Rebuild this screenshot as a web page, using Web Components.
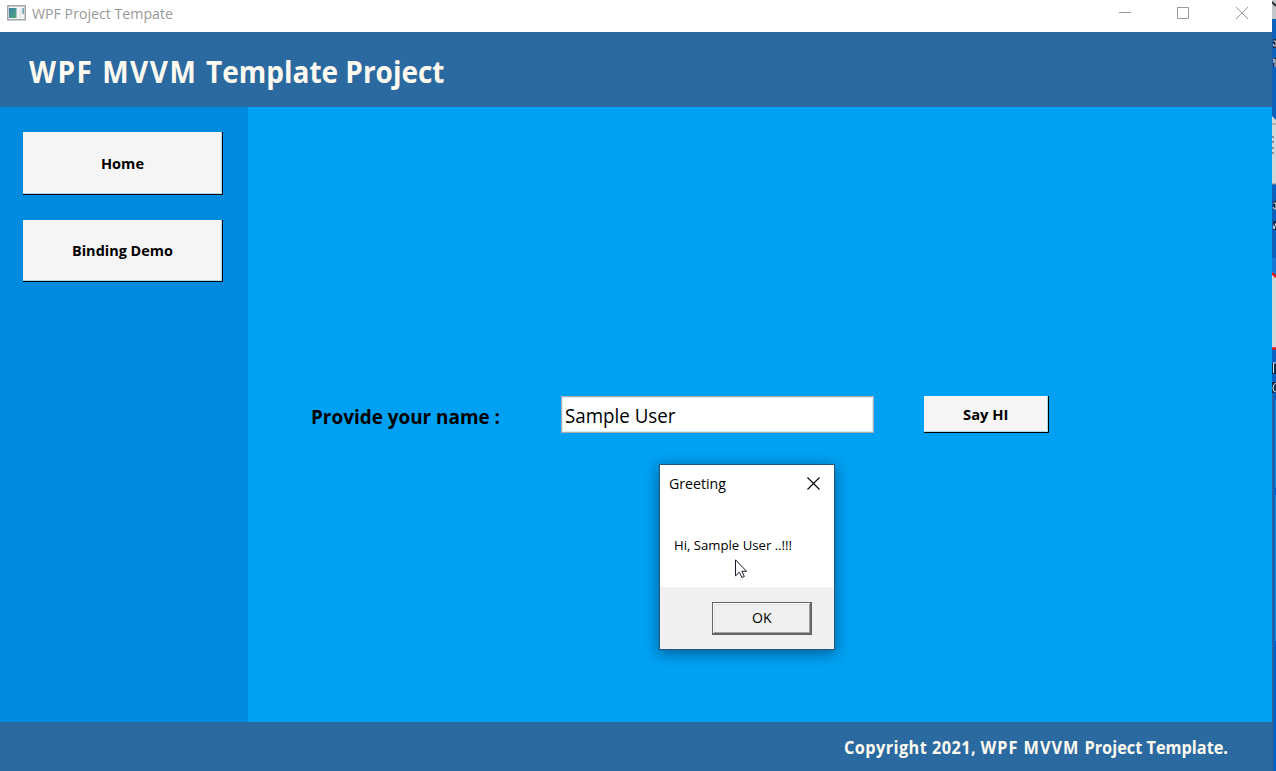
<!DOCTYPE html>
<html lang="en"><head><meta charset="utf-8"><title>WPF Project Tempate</title>
<style>html,body{margin:0;height:100%;overflow:hidden}body{font-family:"Open Sans","Noto Sans",sans-serif}</style></head>
<body><wpf-desktop></wpf-desktop>
<script>
function define(name, html, after) {
  const t = document.createElement('template');
  t.innerHTML = html;
  customElements.define(name, class extends HTMLElement {
    connectedCallback() {
      if (this.shadowRoot) return;
      this.attachShadow({mode: 'open'}).append(t.content.cloneNode(true));
      if (after) after(this, this.shadowRoot);
    }
  });
}
// Text condensed or widened to the width given in the "w" attribute.
define('fit-text', `<style>:host{display:block;flex:none;white-space:nowrap}span{display:inline-block;transform-origin:0 50%}</style><span><slot></slot></span>`, (el, root) => {
  const s = root.querySelector('span'), w = +el.getAttribute('w');
  el.style.width = w + 'px';
  s.style.transform = `scaleX(${w / s.getBoundingClientRect().width})`;
});
define('title-bar', `<style>
:host{display:flex;height:32px;background:#fff;color:#999;font-size:15.3px;line-height:27px;box-sizing:border-box;padding-left:7px}
svg{display:block;flex:none}.icon{margin:5px 6px 0 0}.spacer{flex:1}</style>
<svg class="icon" width="19" height="16"><defs><linearGradient id="g" x2="1" y2="1"><stop stop-color="#3a7fae"/><stop offset="1" stop-color="#55ab72"/></linearGradient></defs><rect x=".75" y=".75" width="17.5" height="14" fill="#f5f5f7" stroke="#a3a6ad" stroke-width="1.5"/><rect x="2" y="3" width="7.5" height="10" fill="url(#g)"/><rect x="12" y="3" width="3" height="10" fill="#e9ebee"/><rect x="15.5" y="3" width="1.3" height="6" fill="#4d94a2"/></svg>
<fit-text w="141">WPF Project Tempate</fit-text><span class="spacer"></span>
<svg width="153" height="32" fill="none" stroke="#999"><path d="M0 12.5h12M58.5 7.5h11v11h-11zM117 7l12 12M129 7l-12 12"/></svg>`);
define('app-header', `<style>:host{display:block;height:75px;box-sizing:border-box;padding:2px 0 0 29px;background:#2b6aa0;color:#fffaf0;font-size:29.7px;font-weight:700;line-height:75px}.wide{letter-spacing:1.6px}</style><fit-text w="415.5"><span class="wide">WPF MVVM </span>Template Project</fit-text>`);
define('raised-button', `<style>:host{display:flex;align-items:center;justify-content:center;box-sizing:border-box;background:#f5f5f5;color:#000;font-weight:700;line-height:20px;border:solid #000;border-width:0 1px 1px 0;box-shadow:inset -1px -1px #add8e6}</style><slot></slot>`);
define('side-nav', `<style>:host{display:flex;flex-direction:column;gap:25px;width:248px;flex:none;box-sizing:border-box;padding:25px 25px 0 23px;background:#008bde;font-size:14.9px}.a{height:63px}.b{height:62px;padding-bottom:1px}</style>
<raised-button class="a"><fit-text w="43">Home</fit-text></raised-button><raised-button class="b"><fit-text w="101">Binding Demo</fit-text></raised-button>`);
define('greeting-form', `<style>:host{display:flex;align-items:flex-start;flex:1;padding:289px 0 0 62.5px;background:#00a1f3;color:#000}
.label{font-size:19.3px;font-weight:700;line-height:42px;margin-right:61.5px}
.field{width:313px;height:37px;box-sizing:border-box;border:1px solid #abadb3;box-shadow:inset 0 0 0 1px #d8eef7;background:#fff;padding:1px 0 0 3px;font-size:19.4px;line-height:36px;margin-right:50px}
raised-button{width:125px;height:37px;font-size:14.5px;padding:1px 1px 0 0}</style>
<fit-text class="label" w="189">Provide your name :</fit-text>
<div class="field"><fit-text w="110.5">Sample User</fit-text></div>
<raised-button><fit-text w="45.5">Say HI</fit-text></raised-button>`);
define('app-footer', `<style>:host{display:flex;justify-content:flex-end;height:49px;box-sizing:border-box;padding:1px 44px 0 0;background:#2b6aa0;color:#fffaf0;font-size:17.2px;font-weight:700;line-height:49px}.a{letter-spacing:.45px}.b{letter-spacing:1px}</style><fit-text w="384"><span class="a">Copyright 2021, </span><span class="b">WPF MVVM </span>Project Template.</fit-text>`);
define('message-box', `<style>
:host{position:absolute;left:659px;top:464px;width:176px;height:186px;box-sizing:border-box;border:1px solid #235a7c;background:#fff;color:#000;display:flex;flex-direction:column;box-shadow:0 3px 13px rgba(0,20,50,.5)}
.bar{display:flex;justify-content:space-between;height:66px;padding:0 14px 0 9px;font-size:15px;line-height:37px}
.bar svg{margin-top:12px}
.msg{flex:1;padding-left:14px;font-size:13.5px;line-height:28px}
.foot{height:62px;background:#f0f0f0;box-sizing:border-box;padding:15px 22px 0 0;display:flex;justify-content:flex-end}
.ok{width:100px;height:33px;box-sizing:border-box;border:1px solid #646464;border-right-width:2px;border-bottom-width:2px;box-shadow:inset 1px 1px #fff,inset -1px -1px #a0a0a0,inset 2px 2px #e3e3e3;display:flex;justify-content:center;align-items:center;font-size:14px;line-height:20px}
.cursor{position:absolute;left:75px;top:94px}</style>
<div class="bar"><fit-text w="57">Greeting</fit-text><svg width="13.5" height="13" stroke="#000" stroke-width="1.1"><path d="M.5.5l12 12M12.500.5l-12 12"/></svg></div>
<div class="msg"><fit-text w="118">Hi, Sample User ..!!!</fit-text></div>
<div class="foot"><div class="ok"><fit-text w="19.5">OK</fit-text></div></div>
<svg class="cursor" width="13" height="20" fill="#fff" stroke="#181828"><path d="M.5.8v16l3.8-3.6 2.6 5.3 2.4-1-2.4-5.2h4.7z"/></svg>`);
// Strip of the desktop that shows past the window's right edge.
define('desktop-edge', `<style>:host{display:block;width:4px;height:771px;flex:none;overflow:hidden}svg{display:block}</style>
<svg width="4" height="771"><rect width="4" height="771" fill="#0762c4"/><rect width="4" height="19" fill="#c3c6c9"/><path d="M0 2l4 4" stroke="#333" stroke-width="2"/><path d="M0 116l4 4v64h-4z" fill="#d5d5d7"/><path d="M0 124h4M0 184h4" stroke="#88898c"/><path d="M0 137h2M0 142h2M0 148h2M0 153h2" stroke="#6c7190" stroke-width="1.5"/><rect y="258" width="4" height="20" fill="#1478d4"/><path d="M0 272l4 4v72h-4z" fill="#d5d5d7"/><path d="M0 273l4 4M0 348.500h4" stroke="#e01818" stroke-width="2.500"/><path d="M0 39h4v9h-4zM0 58h4v9h-4zM0 201h4v9h-4zM0 221h4v9h-4zM0 363h4v11h-4zM0 382h4v11h-4z" fill="#122c50"/><path d="M1.500 41q3-1 2.500 2v3q-3 1-2.500-2M0 59h2v3h-2M3 59v8M1.500 203q3-1 2.500 2v4q-3 1-2.500-2M0 222l2 7 2-6M1 363h3M1.500 363v10M4 383q-3 1-3 5 0 4 3 4" stroke="#d8e2ec" fill="none"/><path d="M3.500 400v88M3.500 495v146" stroke="#278bd8"/><path d="M.5 20v96M.5 185v73" stroke="#1a5cab"/><path d="M.5 394v377" stroke="#3b5f8d"/></svg>`);
define('wpf-desktop', `<style>:host{display:flex;position:relative;width:1276px;height:771px;overflow:hidden}.win{width:1272px;display:flex;flex-direction:column}.body{flex:1;display:flex}</style>
<div class="win"><title-bar></title-bar><app-header></app-header><div class="body"><side-nav></side-nav><greeting-form></greeting-form></div><app-footer></app-footer></div><desktop-edge></desktop-edge><message-box></message-box>`);
</script></body></html>
